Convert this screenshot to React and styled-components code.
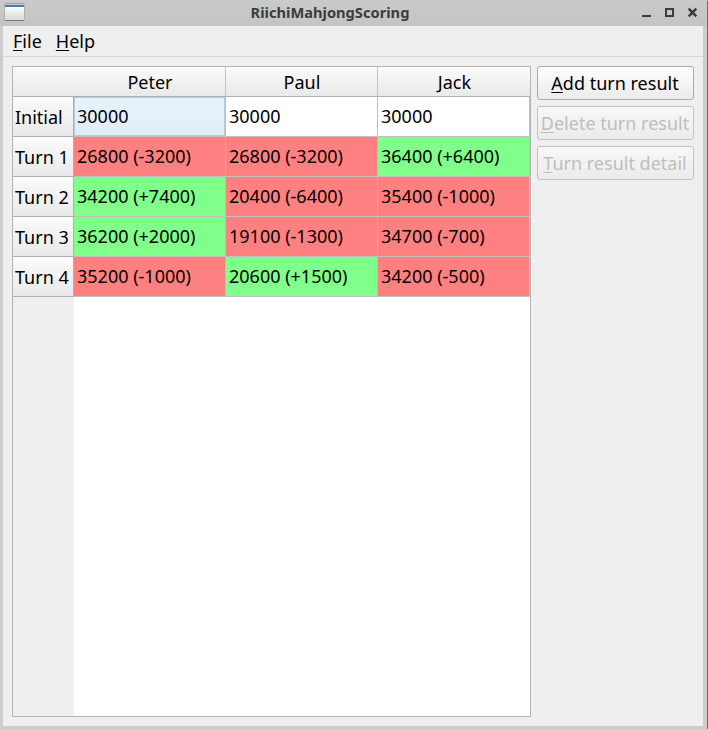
import React from "react";
import styled, { createGlobalStyle } from "styled-components";

const GlobalStyle = createGlobalStyle`
  * { box-sizing: border-box; }
  html, body { margin: 0; padding: 0; overflow: hidden; }
  body {
    font-family: "Noto Sans", sans-serif;
    font-size: 18px;
    color: #000;
    background: #cdcdcd;
  }
`;

const Window = styled.div`
  display: flex;
  flex-direction: column;
  width: 708px;
  height: 729px;
  padding: 0 4px 3px 3px;
  background: #cdcdcd;
  border-right: 1px solid #6a6a6a;
  border-top-right-radius: 2px;
`;

const TitleBar = styled.header`
  display: grid;
  grid-template-columns: 62px 1fr 62px;
  align-items: center;
  height: 26px;
  flex: none;
  margin: 0 -4px 0 -3px;
  padding: 0 9px 0 4px;
  background: linear-gradient(#cacaca, #c4c4c4);
`;

const Title = styled.h1`
  margin: 0;
  padding-right: 42px;
  text-align: center;
  font-size: 14.67px;
  font-weight: 700;
  height: 26px;
  line-height: 24px;
  color: #3c3c3c;
`;

const WindowIcon = styled.svg`
  display: block;
  width: 21px;
  height: 18px;
  margin-top: -2px;
`;

const Controls = styled.svg`
  display: block;
  width: 62px;
  height: 26px;
`;

const Client = styled.main`
  display: flex;
  flex-direction: column;
  flex: 1;
  min-height: 0;
  background: #efefef;
`;

const MenuBar = styled.nav`
  display: flex;
  gap: 14px;
  height: 31px;
  flex: none;
  padding-left: 10px;
  border-bottom: 1px solid #d5d5d5;
  line-height: 31px;
`;

const Mnemonic = styled.span`
  text-decoration: underline;
  text-decoration-thickness: 1px;
  text-underline-offset: 2px;
  text-decoration-skip-ink: none;
`;

const Content = styled.div`
  display: flex;
  align-items: stretch;
  gap: 6px;
  flex: 1;
  min-height: 0;
  padding: 9px;
`;

const TableFrame = styled.section`
  width: 519px;
  flex: none;
  border: 1px solid #b5b5b5;
  background: linear-gradient(to right, #efefef 61px, #fff 61px);
`;

const TableRow = styled.div`
  display: grid;
  grid-template-columns: 61px 152px 152px 152px;
  grid-template-rows: ${(p) => (p.$header ? 30 : 40)}px;
`;

const HeaderCell = styled.div`
  padding-left: 1px;
  line-height: 31px;
  text-align: center;
  background: linear-gradient(#fbfbfb, #e9e9e9);
  border-bottom: 1px solid #b0b0b0;
  border-right: ${(p) => (p.$edge ? "none" : "1px solid #c4c4c4")};
`;

const RowLabel = styled.div`
  padding-left: 2px;
  line-height: 41px;
  white-space: nowrap;
  background: linear-gradient(#fbfbfb, #e9e9e9);
  border-right: 1px solid #b0b0b0;
  border-bottom: 1px solid #b0b0b0;
`;

const fills = {
  gain: "#80ff8a",
  loss: "#ff8080",
  plain: "#fff",
  current: "linear-gradient(#e7f4fd, #e2ecf5)",
};

const Cell = styled.div`
  padding-left: 3px;
  line-height: 39px;
  white-space: nowrap;
  background: ${(p) => fills[p.$tone]};
  border-right: 1px solid #c0c0c0;
  border-bottom: 1px solid #c0c0c0;
  box-shadow: ${(p) => (p.$tone === "current" ? "inset 0 0 0 1px #b5cadb" : "none")};
`;

const Actions = styled.aside`
  display: flex;
  flex-direction: column;
  gap: 6px;
  width: 157px;
`;

const Button = styled.button`
  height: 34px;
  flex: none;
  padding: 0 1px 0 0;
  font: inherit;
  line-height: 32px;
  white-space: nowrap;
  text-align: center;
  color: ${(p) => (p.disabled ? "#bebebe" : "#000")};
  background: ${(p) => (p.disabled ? "linear-gradient(#f8f8f8, #ebebeb)" : "linear-gradient(#fefefe, #ebebeb)")};
  border: 1px solid ${(p) => (p.disabled ? "#c3c3c3" : "#ababab")};
  border-radius: 3px;
`;

const players = ["Peter", "Paul", "Jack"];
const rows = [
  ["Initial", "30000", "30000", "30000"],
  ["Turn 1", "26800 (-3200)", "26800 (-3200)", "36400 (+6400)"],
  ["Turn 2", "34200 (+7400)", "20400 (-6400)", "35400 (-1000)"],
  ["Turn 3", "36200 (+2000)", "19100 (-1300)", "34700 (-700)"],
  ["Turn 4", "35200 (-1000)", "20600 (+1500)", "34200 (-500)"],
];

function toneOf(text, row, col) {
  if (row === 0 && col === 0) return "current";
  if (text.includes("+")) return "gain";
  if (text.includes("-")) return "loss";
  return "plain";
}

function Label({ text }) {
  return (
    <>
      <Mnemonic>{text[0]}</Mnemonic>
      {text.slice(1)}
    </>
  );
}

export default function App() {
  return (
    <>
      <GlobalStyle />
      <Window>
        <TitleBar>
          <WindowIcon viewBox="0 0 21 18" shapeRendering="crispEdges">
            <defs>
              <linearGradient id="pane" x1="0" y1="0" x2="0" y2="1">
                <stop offset="0" stopColor="#fff" />
                <stop offset="1" stopColor="#d9dbd6" />
              </linearGradient>
            </defs>
            <rect x="0" y="1" width="21" height="16" fill="#aeb0ad" />
            <rect x="1" y="0" width="19" height="18" fill="#9a9fa2" />
            <rect x="1" y="2" width="19" height="15" fill="url(#pane)" />
            <rect x="1" y="1" width="19" height="1" fill="#c3cbd6" />
            <rect x="1" y="2" width="19" height="2" fill="#5078b4" />
            <rect x="1" y="17" width="19" height="1" fill="#777a75" />
          </WindowIcon>
          <Title>RiichiMahjongScoring</Title>
          <Controls viewBox="0 0 62 26" fill="none" stroke="#3c3c3c" strokeWidth="2">
            <path d="M6 16h9" />
            <rect x="30" y="9" width="7" height="7" />
            <path d="M52.7 8.7l7.6 7.6M60.3 8.7l-7.6 7.6" strokeWidth="2.5" />
          </Controls>
        </TitleBar>
        <Client>
          <MenuBar>
            <span><Label text="File" /></span>
            <span><Label text="Help" /></span>
          </MenuBar>
          <Content>
            <TableFrame>
              <TableRow $header>
                <HeaderCell $edge />
                {players.map((name, i) => (
                  <HeaderCell key={name} $edge={i === 2}>{name}</HeaderCell>
                ))}
              </TableRow>
              {rows.map(([label, ...scores], r) => (
                <TableRow key={label}>
                  <RowLabel>{label}</RowLabel>
                  {scores.map((score, c) => (
                    <Cell key={c} $tone={toneOf(score, r, c)}>{score}</Cell>
                  ))}
                </TableRow>
              ))}
            </TableFrame>
            <Actions>
              <Button><Label text="Add turn result" /></Button>
              <Button disabled><Label text="Delete turn result" /></Button>
              <Button disabled><Label text="Turn result detail" /></Button>
            </Actions>
          </Content>
        </Client>
      </Window>
    </>
  );
}
